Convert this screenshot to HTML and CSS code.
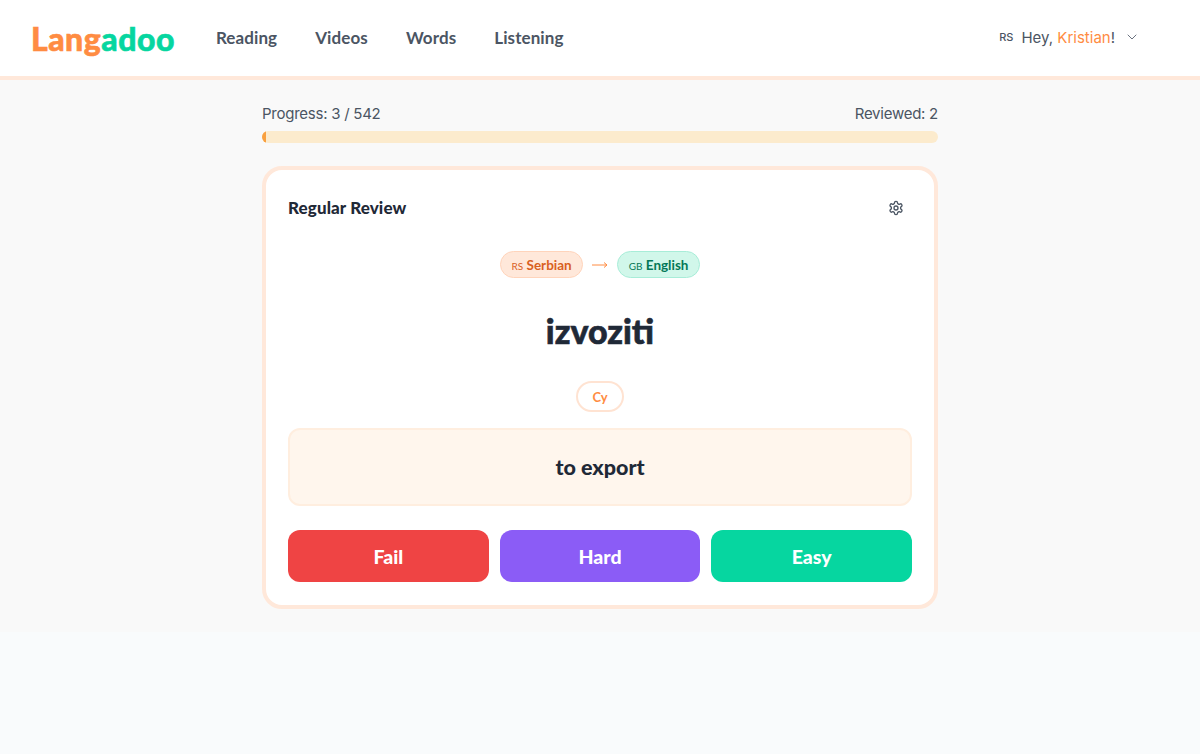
FILE: index.html
```html
<!DOCTYPE html>
<html lang="en">

<head>
  <meta charset="UTF-8">
  <meta name="viewport" content="width=device-width, initial-scale=1.0">
  <title>Langadoo - Regular Review</title>
  <link rel="stylesheet" href="styles.css">
</head>

<body>
  <header class="topbar">
    <a class="logo" href="#"><span class="logo-orange">Lang</span><span class="logo-green">adoo</span></a>
    <nav class="nav">
      <a href="#">Reading</a>
      <a href="#">Videos</a>
      <a href="#">Words</a>
      <a href="#">Listening</a>
    </nav>
    <div class="user">
      <span class="user-flag">RS</span>
      <span class="user-hey">Hey, <span class="user-name">Kristian</span>!</span>
      <svg class="chevron" width="12" height="12" viewBox="0 0 24 24" fill="none" stroke="currentColor" stroke-width="2" stroke-linecap="round" stroke-linejoin="round">
        <path d="M4 8l8 8 8-8" />
      </svg>
    </div>
  </header>

  <main class="main">
    <div class="column">
      <div class="progress-text">
        <span>Progress: 3 / 542</span>
        <span>Reviewed: 2</span>
      </div>
      <div class="progress-track">
        <div class="progress-fill"></div>
      </div>

      <section class="card">
        <div class="card-head">
          <h2>Regular Review</h2>
          <svg class="gear" width="16" height="16" viewBox="0 0 24 24" fill="none" stroke="currentColor" stroke-width="2" stroke-linecap="round" stroke-linejoin="round">
            <path d="M12.22 2h-.44a2 2 0 0 0-2 2v.18a2 2 0 0 1-1 1.73l-.43.25a2 2 0 0 1-2 0l-.15-.08a2 2 0 0 0-2.73.73l-.22.38a2 2 0 0 0 .73 2.73l.15.1a2 2 0 0 1 1 1.72v.51a2 2 0 0 1-1 1.74l-.15.09a2 2 0 0 0-.73 2.73l.22.38a2 2 0 0 0 2.73.73l.15-.08a2 2 0 0 1 2 0l.43.25a2 2 0 0 1 1 1.73V20a2 2 0 0 0 2 2h.44a2 2 0 0 0 2-2v-.18a2 2 0 0 1 1-1.73l.43-.25a2 2 0 0 1 2 0l.15.08a2 2 0 0 0 2.73-.73l.22-.39a2 2 0 0 0-.73-2.73l-.15-.08a2 2 0 0 1-1-1.74v-.5a2 2 0 0 1 1-1.74l.15-.09a2 2 0 0 0 .73-2.73l-.22-.38a2 2 0 0 0-2.73-.73l-.15.08a2 2 0 0 1-2 0l-.43-.25a2 2 0 0 1-1-1.73V4a2 2 0 0 0-2-2z" />
            <circle cx="12" cy="12" r="3" />
          </svg>
        </div>

        <div class="langs">
          <span class="pill pill-from"><span class="pill-flag">RS</span> Serbian</span>
          <svg class="arrow" width="18" height="8" viewBox="0 0 18 8" fill="none" stroke="currentColor" stroke-width="1">
            <path d="M1 4h15M13 1.5L16 4l-3 2.5" />
          </svg>
          <span class="pill pill-to"><span class="pill-flag">GB</span> English</span>
        </div>

        <div class="word">izvoziti</div>

        <div class="script-row">
          <button class="script-toggle">Cy</button>
        </div>

        <div class="answer">to export</div>

        <div class="actions">
          <button class="action action-fail">Fail</button>
          <button class="action action-hard">Hard</button>
          <button class="action action-easy">Easy</button>
        </div>
      </section>
    </div>
  </main>
</body>

</html>
```

FILE: styles.css
```css
* {
  box-sizing: border-box;
}

body {
  margin: 0;
  min-height: 754px;
  background-color: #f9fbfc;
  color: #1f2937;
  font-family: 'Inter', 'Liberation Sans', sans-serif;
}

a {
  text-decoration: none;
}

button {
  font-family: inherit;
  border: none;
}

.topbar {
  display: flex;
  align-items: center;
  height: 80px;
  padding: 0 62px 2px 31px;
  background-color: #fff;
  border-bottom: 4px solid #ffe8da;
}

.logo {
  margin-top: 2px;
  font-family: 'Lato', sans-serif;
  font-size: 32px;
  font-weight: 900;
  letter-spacing: 0.5px;
  -webkit-text-stroke: 0.6px;
}

.logo-orange {
  color: #ff8c42;
}

.logo-green {
  color: #06d6a0;
}

.nav {
  display: flex;
  gap: 38px;
  margin-left: 41px;
}

.nav a {
  color: #4b5563;
  font-family: 'Lato', sans-serif;
  font-size: 17px;
  font-weight: 700;
  letter-spacing: 0.1px;
}

.user {
  display: flex;
  align-items: center;
  margin-left: auto;
  color: #4b5563;
}

.user-flag {
  font-size: 11px;
  font-weight: 500;
  margin-right: 8px;
}

.user-hey {
  font-size: 15px;
}

.user-name {
  color: #ff8c42;
}

.chevron {
  margin-left: 11px;
  color: #6b7280;
}

.main {
  height: 552px;
  background-color: #f9f9f9;
  padding-top: 23px;
}

.column {
  width: 676px;
  margin: 0 auto;
}

.progress-text {
  display: flex;
  justify-content: space-between;
  font-size: 15px;
  letter-spacing: -0.25px;
  line-height: 22px;
  color: #4b5563;
}

.progress-track {
  height: 12px;
  margin-top: 6px;
  background-color: #fcebcd;
  border-radius: 6px;
  overflow: hidden;
}

.progress-fill {
  width: 4px;
  height: 100%;
  background-color: #f9a03f;
}

.card {
  margin-top: 23px;
  padding: 23px 22px 23px;
  background-color: #fff;
  border: 4px solid #ffe8da;
  border-radius: 20px;
}

.card-head {
  display: flex;
  align-items: center;
  justify-content: space-between;
  height: 28px;
  padding-right: 8px;
}

.card-head h2 {
  margin: 0;
  font-family: 'Lato', sans-serif;
  font-size: 17px;
  font-weight: 900;
  letter-spacing: 0.1px;
  color: #1f2937;
}

.gear {
  margin-top: 2px;
  color: #4b5563;
}

.langs {
  display: flex;
  align-items: center;
  justify-content: center;
  gap: 8px;
  margin-top: 30px;
}

.pill {
  display: inline-block;
  height: 27px;
  padding: 0 10.5px;
  border-radius: 14px;
  font-family: 'Lato', sans-serif;
  font-size: 13.5px;
  font-weight: 700;
  line-height: 26px;
}

.pill-flag {
  font-size: 10px;
  font-weight: 400;
}

.pill-from {
  background-color: #ffe8da;
  border: 1px solid #ffd4bb;
  color: #d9601f;
}

.pill-to {
  background-color: #d1f7ea;
  border: 1px solid #a8edd8;
  color: #047857;
}

.arrow {
  color: #ff8c42;
}

.word {
  margin-top: 31px;
  height: 44px;
  font-family: 'Lato', sans-serif;
  font-size: 34px;
  font-weight: 900;
  line-height: 44px;
  text-align: center;
  color: #1f2937;
  -webkit-text-stroke: 0.6px;
}

.script-row {
  display: flex;
  justify-content: center;
  margin-top: 28px;
}

.script-toggle {
  width: 48px;
  height: 31px;
  background-color: #fff;
  border: 2px solid #ffe3d2;
  border-radius: 16px;
  color: #ff8c42;
  font-family: 'Lato', sans-serif;
  font-size: 13px;
  font-weight: 700;
}

.answer {
  display: flex;
  align-items: center;
  justify-content: center;
  height: 78px;
  margin-top: 16px;
  background-color: #fff6ed;
  border: 2px solid #ffeedf;
  border-radius: 12px;
  font-family: 'Lato', sans-serif;
  font-size: 21.5px;
  font-weight: 900;
  color: #1f2937;
}

.actions {
  display: grid;
  grid-template-columns: repeat(3, 1fr);
  gap: 11px;
  margin-top: 24px;
}

.action {
  height: 52px;
  border-radius: 12px;
  color: #fff;
  font-family: 'Lato', sans-serif;
  font-size: 19.5px;
  font-weight: 900;
}

.action-fail {
  background-color: #ef4444;
}

.action-hard {
  background-color: #8b5cf6;
}

.action-easy {
  background-color: #06d6a0;
}
```
